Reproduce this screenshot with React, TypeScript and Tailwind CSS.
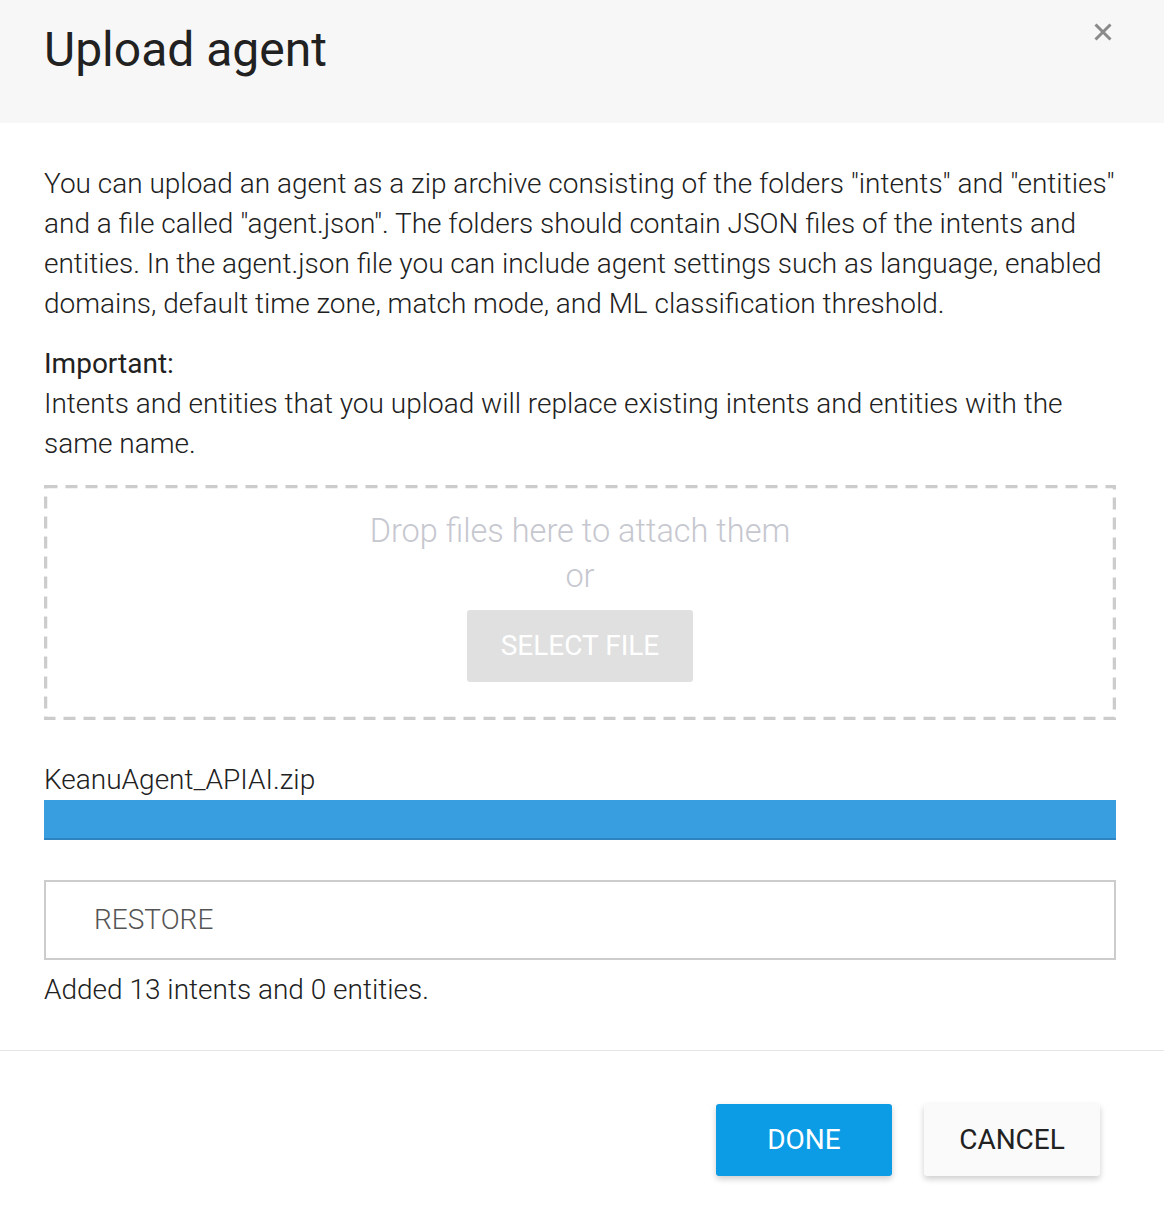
import React from "react";

export default function App() {
  return (
    <div className="w-[1164px] h-[1222px] bg-white text-[#212121]" style={{ fontFamily: "Roboto, 'Noto Sans', sans-serif" }}>
      <div className="relative h-[123px] bg-[#f7f7f7] pl-[44px] pt-[20px]">
        <h1 className="text-[48px] leading-[60px] font-normal text-[#212121]">Upload agent</h1>
        <button className="absolute right-[51px] top-[22px] w-[20px] h-[20px] flex items-center justify-center">
          <svg width="20" height="20" viewBox="0 0 20 20">
            <path d="M2.5 2.5 L17.5 17.5 M17.5 2.5 L2.5 17.5" stroke="#8a8a8a" strokeWidth="3" />
          </svg>
        </button>
      </div>

      <div className="pl-[44px] pr-[48px] pt-[41px] pb-[40px] border-b border-[#e5e5e5]">
        <p className="text-[28px] leading-[40px] font-light">
          You can upload an agent as a zip archive consisting of the folders "intents" and "entities" and a file called "agent.json". The folders should contain JSON files of the intents and entities. In the agent.json file you can include agent settings such as language, enabled domains, default time zone, match mode, and ML classification threshold.
        </p>
        <div className="mt-[20px] text-[28px] leading-[40px]">
          <div className="font-normal">Important:</div>
          <div className="font-light">
            Intents and entities that you upload will replace existing intents and entities with the same name.
          </div>
        </div>

        <div className="relative mt-[21px] h-[235px] flex flex-col items-center pt-[24px]">
          <svg className="absolute inset-0" width="1072" height="235">
            <rect x="1.5" y="1.5" width="1069" height="232" fill="none" stroke="#cccccc" strokeWidth="3.5" strokeDasharray="12 8" />
          </svg>
          <div className="text-[32.5px] leading-[45px] font-light text-[#c6c7cf]">Drop files here to attach them</div>
          <div className="text-[32.5px] leading-[45px] font-light text-[#c6c7cf]">or</div>
          <div className="mt-[11px] w-[226px] h-[72px] rounded-[3px] bg-[#e0e0e0] flex items-center justify-center text-[28px] font-normal text-white">
            SELECT FILE
          </div>
        </div>

        <div className="mt-[40px] text-[28px] leading-[40px] font-light text-[#212121]">KeanuAgent_APIAI.zip</div>
        <div className="h-[40px] bg-[#389ee0] border-b-2 border-[#2f84c0]"></div>

        <div className="mt-[40px] h-[80px] border-2 border-[#cccccc] flex items-center pl-[48px] text-[28px] font-light text-[#555555]">
          RESTORE
        </div>

        <div className="mt-[10px] text-[28px] leading-[40px] font-light">Added 13 intents and 0 entities.</div>
      </div>

      <div className="flex justify-end gap-[32px] pr-[64px] pt-[53px]">
        <button className="w-[176px] h-[72px] rounded-[3px] bg-[#0b9ce5] text-white text-[28px] font-normal shadow-[0_3px_6px_rgba(0,0,0,0.2)]">
          DONE
        </button>
        <button className="w-[176px] h-[72px] rounded-[3px] bg-[#fafafa] text-[#212121] text-[28px] font-normal shadow-[0_3px_6px_rgba(0,0,0,0.2)]">
          CANCEL
        </button>
      </div>
    </div>
  );
}
